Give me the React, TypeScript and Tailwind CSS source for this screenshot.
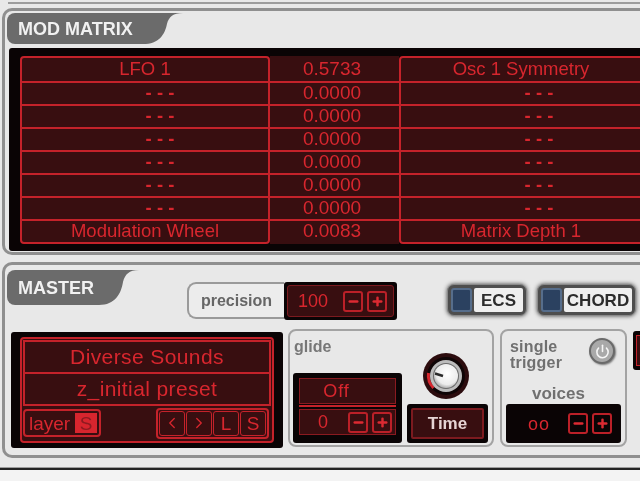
import { ChevronLeft, ChevronRight, Minus, Plus, Power } from "lucide-react";

const rows = [
  ["LFO 1", "0.5733", "Osc 1 Symmetry"],
  ["- - -", "0.0000", "- - -"],
  ["- - -", "0.0000", "- - -"],
  ["- - -", "0.0000", "- - -"],
  ["- - -", "0.0000", "- - -"],
  ["- - -", "0.0000", "- - -"],
  ["- - -", "0.0000", "- - -"],
  ["Modulation Wheel", "0.0083", "Matrix Depth 1"],
];

function PanelTab({ title, width, height }: { title: string; width: number; height: number }) {
  return (
    <div className="flex shrink-0" style={{ height }}>
      <div
        className="bg-[#6b6b6b] rounded-tl-[8px] rounded-bl-[8px] pl-[11px] flex items-center text-[#f1f1f1] font-bold text-[18px] leading-none"
        style={{ width }}
      >
        {title}
      </div>
      <svg width="44" height={height} viewBox="0 0 44 32" preserveAspectRatio="none" className="shrink-0">
        <path d="M0 0 H44 C34 0 30 4 28 11 C26 22 20 32 4 32 H0 Z" fill="#6b6b6b" />
      </svg>
    </div>
  );
}

function StepButton({ kind }: { kind: "minus" | "plus" }) {
  const Icon = kind === "minus" ? Minus : Plus;
  return (
    <div className="w-[20px] h-[21px] border-2 border-[#bb2028] rounded-[3px] flex items-center justify-center">
      <Icon size={13} strokeWidth={4.5} color="#dc2a32" />
    </div>
  );
}

function Stepper() {
  return (
    <div className="flex gap-[4px]">
      <StepButton kind="minus" />
      <StepButton kind="plus" />
    </div>
  );
}

function LedButton({ label, width }: { label: string; width: number }) {
  return (
    <div
      className="h-[32px] rounded-[7px] bg-[#4e4e4e] border border-[#8a8a8a] flex items-center gap-[2px] px-[3px] shadow-[0_0_4px_#444]"
      style={{ width }}
    >
      <div className="w-[21px] h-[24px] shrink-0 rounded-[3px] bg-[#2b4160] border-2 border-[#566d8b]" />
      <div className="flex-1 h-[24px] bg-[#efefef] rounded-[2px] flex items-center justify-center text-[#2c2c2c] font-bold text-[17px] leading-none">
        {label}
      </div>
    </div>
  );
}

function Knob() {
  return (
    <svg width="48" height="48" viewBox="0 0 48 48">
      <defs>
        <radialGradient id="cap" cx="0.55" cy="0.4" r="0.7">
          <stop offset="0" stopColor="#ffffff" />
          <stop offset="0.65" stopColor="#ececec" />
          <stop offset="1" stopColor="#8a8a8a" />
        </radialGradient>
      </defs>
      <circle cx="24" cy="24" r="23" fill="#2c0c0e" />
      <circle cx="24" cy="24" r="19" fill="#0f0506" />
      <path d="M11.5 36 A18 18 0 0 1 6.5 21" fill="none" stroke="#d8262e" strokeWidth="3" />
      <circle cx="24" cy="24" r="16" fill="#bcbcbc" />
      <circle cx="24" cy="24" r="13" fill="#6a6a6a" />
      <circle cx="24" cy="24" r="12" fill="url(#cap)" />
      <path d="M13 21.5 L21 24" stroke="#2a2a2a" strokeWidth="2.5" />
    </svg>
  );
}

export default function App() {
  return (
    <div className="w-[640px] h-[481px] overflow-hidden bg-[#e8e8e8] font-['Liberation_Sans',sans-serif] blur-[0.6px]">
      <div className="h-[8px] pt-[2px]">
        <div className="h-[2px] ml-[8px] bg-[#9c9c9c]" />
      </div>

      {/* mod matrix */}
      <div className="h-[247px] border-[3px] border-r-0 border-[#8f8f8f] rounded-l-[10px] ml-[2px] pt-[2px] pl-[2px] bg-[#e8e8e8]">
        <PanelTab title="MOD MATRIX" width={132} height={31} />
        <div className="mt-[4px] ml-[2px] h-[203px] bg-[#0a0405] rounded-l-[3px] pl-[11px] pt-[8px] flex text-[#d8262e] text-[18.5px] leading-none">
          <div className="w-[250px] h-[188px] shrink-0 grid grid-rows-8 border-2 border-[#c4222a] rounded-[4px] bg-[#380e10] text-center">
            {rows.map((r, i) => (
              <div
                key={i}
                className={`flex items-center justify-center ${i > 0 ? "border-t-2 border-[#c4222a]" : ""} ${r[0] === "- - -" ? "pl-[30px] font-bold" : ""}`}
              >
                {r[0]}
              </div>
            ))}
          </div>
          <div className="w-[129px] h-[188px] shrink-0 py-[2px] grid grid-rows-8 bg-[#380e10] text-[19px]">
            {rows.map((r, i) => (
              <div key={i} className={`flex items-center justify-center pr-[5px] pb-[3px] ${i > 0 ? "border-t-2 border-[#c4222a]" : ""}`}>
                {r[1]}
              </div>
            ))}
          </div>
          <div className="w-[280px] h-[188px] shrink-0 grid grid-rows-8 border-2 border-[#c4222a] rounded-[4px] bg-[#380e10]">
            {rows.map((r, i) => (
              <div
                key={i}
                className={`flex items-center justify-center ${i > 0 ? "border-t-2 border-[#c4222a]" : ""} ${r[2] === "- - -" ? "font-bold" : "pr-[36px]"}`}
              >
                {r[2]}
              </div>
            ))}
          </div>
        </div>
      </div>

      {/* master */}
      <div className="mt-[7px] h-[196px] border-[3px] border-r-0 border-[#8f8f8f] rounded-l-[10px] ml-[2px] pt-[5px]">
        <div className="flex items-start h-[59px] pl-[2px]">
          <PanelTab title="MASTER" width={88} height={35} />
          <div className="mt-[12px] ml-[48px] w-[97px] h-[37px] border-2 border-[#9a9a9a] border-r-0 rounded-l-[9px] bg-[#ececec] flex items-center justify-center text-[#666] font-bold text-[16px]">
            precision
          </div>
          <div className="mt-[12px] w-[113px] h-[38px] bg-[#0a0405] rounded-[3px] p-[3px]">
            <div className="h-full border border-[#7c1a1f] rounded-[3px] bg-[#380e10] flex items-center justify-between pl-[10px] pr-[6px] text-[#d8262e] text-[18px]">
              100
              <Stepper />
            </div>
          </div>
          <div className="mt-[14px] ml-[50px]">
            <LedButton label="ECS" width={80} />
          </div>
          <div className="mt-[14px] ml-[10px]">
            <LedButton label="CHORD" width={99} />
          </div>
        </div>

        <div className="flex items-start pl-[6px]">
          {/* preset */}
          <div className="mt-[3px] w-[272px] h-[116px] shrink-0 bg-[#0a0405] rounded-[3px] px-[9px] py-[5px] text-[#d8262e]">
            <div className="h-full border-2 border-[#c4222a] rounded-[4px] bg-[#380e10] p-[1px] flex flex-col">
              <div className="border-2 border-[#c4222a] text-[21px] tracking-[0.4px]">
                <div className="h-[30px] flex items-center justify-center">Diverse Sounds</div>
                <div className="h-[32px] border-t-2 border-[#c4222a] flex items-center justify-center">z_initial preset</div>
              </div>
              <div className="flex-1 flex items-center justify-between text-[19px] leading-none">
                <div className="h-[28px] w-[78px] border-2 border-[#c4222a] rounded-[4px] flex items-center pl-[4px] gap-[5px]">
                  layer
                  <span className="w-[22px] h-[20px] bg-[#d8252e] text-[#8e1a20] flex items-center justify-center">S</span>
                </div>
                <div className="h-[31px] w-[113px] mr-[2px] border-2 border-[#c4222a] rounded-[4px] p-[1px] flex gap-[1px]">
                  <div className="flex-1 border border-[#c4222a] rounded-[3px] flex items-center justify-center">
                    <ChevronLeft size={18} strokeWidth={1.75} />
                  </div>
                  <div className="flex-1 border border-[#c4222a] rounded-[3px] flex items-center justify-center">
                    <ChevronRight size={18} strokeWidth={1.75} />
                  </div>
                  <div className="flex-1 border border-[#c4222a] rounded-[3px] flex items-center justify-center">L</div>
                  <div className="flex-1 border border-[#c4222a] rounded-[3px] flex items-center justify-center">S</div>
                </div>
              </div>
            </div>
          </div>

          {/* glide */}
          <div className="ml-[5px] w-[206px] h-[118px] shrink-0 border-2 border-[#a3a3a3] rounded-[8px] pl-[3px] pr-[4px] flex gap-[5px]">
            <div className="w-[109px] shrink-0">
              <div className="h-[42px] pl-[1px] pt-[4px] text-[#777] font-bold text-[16px]">glide</div>
              <div className="h-[70px] bg-[#0a0405] rounded-[3px] px-[6px] pt-[5px] text-[#d8262e] text-[18px] leading-none">
                <div className="h-[26px] border border-[#8a1a20] bg-[#380e10] flex items-center justify-center pr-[22px] tracking-[1px]">Off</div>
                <div className="h-[2px] mt-[1px] bg-[#c4222a]" />
                <div className="h-[26px] mt-[2px] border border-[#8a1a20] bg-[#380e10] flex items-center justify-between pl-[18px] pr-[3px]">
                  0
                  <Stepper />
                </div>
              </div>
            </div>
            <div className="flex-1 flex flex-col items-center">
              <div className="h-[73px] pt-[21px] pr-[4px]">
                <Knob />
              </div>
              <div className="w-full h-[39px] bg-[#0a0405] rounded-[3px] p-[4px]">
                <div className="h-full border-2 border-[#7c1a1f] rounded-[2px] bg-[#380e10] flex items-center justify-center text-[#e6d4d4] font-bold text-[17px]">
                  Time
                </div>
              </div>
            </div>
          </div>

          {/* voices */}
          <div className="ml-[6px] w-[127px] h-[118px] shrink-0 border-2 border-[#a3a3a3] rounded-[8px] px-[4px] text-[#707070] font-bold text-[16px] leading-[16px]">
            <div className="flex justify-between h-[55px] pt-[8px] pl-[4px] pr-[6px]">
              <div className="tracking-[0.2px]">
                single
                <br />
                trigger
              </div>
              <div className="w-[26px] h-[26px] mt-[-1px] rounded-full bg-[#a9a9a9] border-2 border-[#6a6a6a] shadow-[1px_1px_2px_#777] flex items-center justify-center">
                <Power size={15} strokeWidth={2.5} color="#f6f6f6" />
              </div>
            </div>
            <div className="h-[18px] text-center pr-[10px] text-[17px]">voices</div>
            <div className="h-[39px] bg-[#0a0405] rounded-[3px] flex items-center justify-between pl-[22px] pr-[9px] text-[#d8262e] font-normal text-[18px] tracking-[1px]">
              oo
              <Stepper />
            </div>
          </div>

          <div className="ml-[6px] w-[20px] h-[39px] mt-[2px] shrink-0 bg-[#0a0405] rounded-[3px] pl-[3px] py-[4px]">
            <div className="h-full bg-[#380e10] border border-[#c4222a]" />
          </div>
        </div>
      </div>

      <div className="mt-[9px] h-[3px] border-t border-[#9c9c9c] bg-[#222]" />
      <div className="h-[12px] bg-[#f3f3f3]" />
    </div>
  );
}
